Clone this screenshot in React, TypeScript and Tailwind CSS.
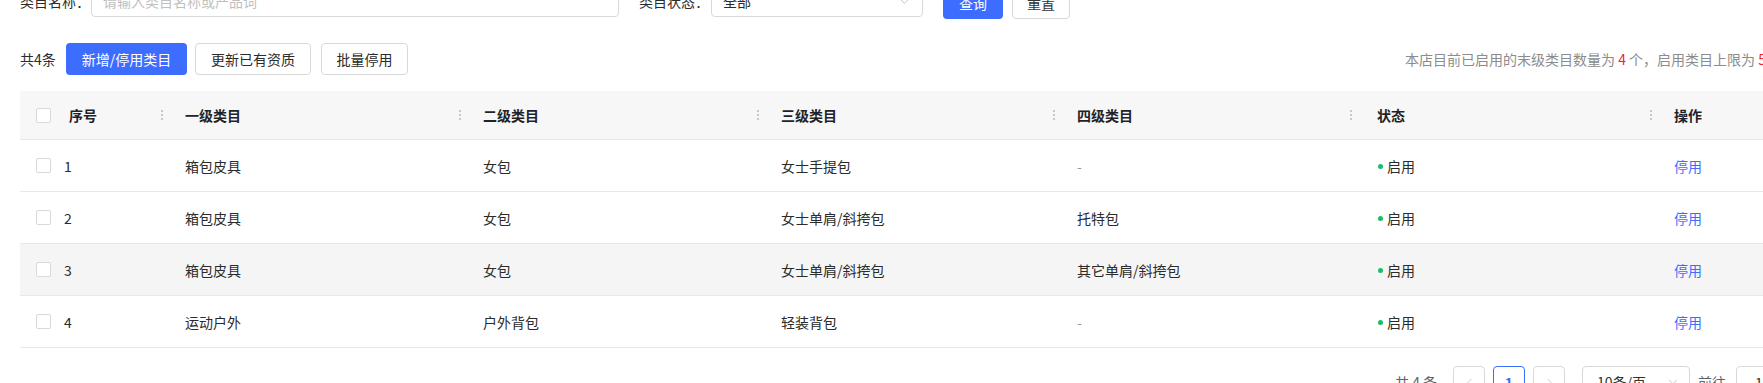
import { ChevronDown, ChevronLeft, ChevronRight } from 'lucide-react'

interface Row {
  id: number
  l1: string
  l2: string
  l3: string
  l4: string
  hover?: boolean
}

const rows: Row[] = [
  { id: 1, l1: '箱包皮具', l2: '女包', l3: '女士手提包', l4: '-' },
  { id: 2, l1: '箱包皮具', l2: '女包', l3: '女士单肩/斜挎包', l4: '托特包' },
  { id: 3, l1: '箱包皮具', l2: '女包', l3: '女士单肩/斜挎包', l4: '其它单肩/斜挎包', hover: true },
  { id: 4, l1: '运动户外', l2: '户外背包', l3: '轻装背包', l4: '-' },
]

const cols = 'grid grid-cols-[44px_105px_298px_298px_296px_297px_300px_1fr]'

function Checkbox() {
  return <span className="block w-[15px] h-[15px] border border-[#d9d9d9] rounded-[2px] bg-white" />
}

function Resizer() {
  return (
    <svg width="2" height="10" viewBox="0 0 2 10" className="shrink-0">
      <circle cx="1" cy="1" r="1" fill="#b8b8b8" />
      <circle cx="1" cy="5" r="1" fill="#b8b8b8" />
      <circle cx="1" cy="9" r="1" fill="#b8b8b8" />
    </svg>
  )
}

function HeadCell({ label, pl = 'pl-4' }: { label: string; pl?: string }) {
  return (
    <div className={`flex items-center justify-between pr-[6px] ${pl}`}>
      <span>{label}</span>
      <Resizer />
    </div>
  )
}

export default function App() {
  return (
    <div className="w-[1763px] h-[383px] overflow-hidden bg-white text-[14px] leading-[20px] text-[#2b2b2b] [font-family:'Noto_Sans_CJK_SC','Noto_Sans',sans-serif]">
      <div className="w-[1900px] pl-[20px] -mt-[15px]">
        {/* filter row */}
        <div className="flex items-start h-[34px]">
          <span className="w-[71px] shrink-0 leading-[32px]">类目名称：</span>
          <div className="w-[528px] h-[32px] shrink-0 border border-[#d9d9d9] rounded-[4px] px-[11px] flex items-center text-[#bfbfbf]">
            请输入类目名称或产品词
          </div>
          <span className="ml-[20px] w-[72px] shrink-0 leading-[32px]">类目状态：</span>
          <div className="w-[212px] h-[32px] shrink-0 border border-[#d9d9d9] rounded-[4px] pl-[11px] pr-[10px] flex items-center justify-between">
            <span>全部</span>
            <ChevronDown size={15} strokeWidth={1.5} color="#bfbfbf" />
          </div>
          <div className="ml-[20px] mt-[2px] flex gap-[9px]">
            <button type="button" className="w-[60px] h-[32px] rounded-[4px] bg-[#3d6dff] text-white">查询</button>
            <button type="button" className="w-[58px] h-[32px] rounded-[4px] border border-[#d9d9d9] bg-white text-[#333]">重置</button>
          </div>
        </div>

        {/* toolbar */}
        <div className="mt-[24px] flex items-center h-[32px]">
          <div className="w-[1385px] shrink-0 flex items-center">
            <span className="w-[46px] shrink-0">共4条</span>
            <button type="button" className="w-[121px] h-[32px] rounded-[4px] bg-[#3d6dff] text-white">新增/停用类目</button>
            <button type="button" className="ml-2 w-[116px] h-[32px] rounded-[4px] border border-[#d9d9d9] bg-white">更新已有资质</button>
            <button type="button" className="ml-[10px] w-[87px] h-[32px] rounded-[4px] border border-[#d9d9d9] bg-white">批量停用</button>
          </div>
          <span className="whitespace-nowrap text-[#8c8c8c]">
            本店目前已启用的末级类目数量为 <span className="text-[#f5222d]">4</span> 个，启用类目上限为{' '}
            <span className="text-[#f5222d]">500</span> 个
          </span>
        </div>

        {/* table */}
        <div className="mt-[16px]">
          <div className={`${cols} h-[49px] bg-[#f7f7f7] border-b border-[#e8e8e8] font-semibold text-[#1f2329]`}>
            <div className="flex items-center pl-4">
              <Checkbox />
            </div>
            <HeadCell label="序号" pl="pl-[5px]" />
            <HeadCell label="一级类目" />
            <HeadCell label="二级类目" />
            <HeadCell label="三级类目" />
            <HeadCell label="四级类目" />
            <HeadCell label="状态" pl="pl-[19px]" />
            <div className="flex items-center pl-4">操作</div>
          </div>
          {rows.map((r) => (
            <div
              key={r.id}
              className={`${cols} h-[52px] border-b border-[#e8e8e8] ${r.hover ? 'bg-[#f5f5f5]' : 'bg-white'}`}
            >
              <div className="flex items-center pl-4">
                <Checkbox />
              </div>
              <div className="flex items-center">{r.id}</div>
              <div className="flex items-center pl-4">{r.l1}</div>
              <div className="flex items-center pl-4">{r.l2}</div>
              <div className="flex items-center pl-4">{r.l3}</div>
              <div className={`flex items-center pl-4 ${r.l4 === '-' ? 'text-[#999]' : ''}`}>{r.l4}</div>
              <div className="flex items-center gap-[4px] pl-[20px]">
                <span className="w-[5px] h-[5px] mt-[2px] rounded-full bg-[#19be6b]" />
                <span>启用</span>
              </div>
              <div className="flex items-center pl-4 text-[#3d6dff]">停用</div>
            </div>
          ))}
        </div>

        {/* pagination */}
        <div className="mt-[18px] ml-[1375px] flex items-center h-[32px] text-[#606266]">
          <span className="w-[58px] shrink-0">共 4 条</span>
          <span className="w-[32px] h-[32px] border border-[#d9d9d9] rounded-[4px] flex items-center justify-center">
            <ChevronLeft size={13} strokeWidth={1.5} color="#c0c4cc" />
          </span>
          <span className="ml-2 w-[32px] h-[32px] border border-[#3d6dff] rounded-[4px] flex items-center justify-center text-[#3d6dff] font-semibold">
            1
          </span>
          <span className="ml-2 w-[32px] h-[32px] border border-[#d9d9d9] rounded-[4px] flex items-center justify-center">
            <ChevronRight size={13} strokeWidth={1.5} color="#c0c4cc" />
          </span>
          <span className="ml-[17px] w-[108px] h-[32px] border border-[#d9d9d9] rounded-[4px] pl-[14px] pr-[9px] flex items-center justify-between text-[#333]">
            <span>10条/页</span>
            <ChevronDown size={14} strokeWidth={1.5} color="#bfbfbf" />
          </span>
          <span className="ml-2 w-[38px] shrink-0">前往</span>
          <span className="w-[46px] h-[32px] border border-[#d9d9d9] rounded-[4px] flex items-center justify-center text-[#333]">
            1
          </span>
          <span className="ml-2">页</span>
        </div>
      </div>
    </div>
  )
}
